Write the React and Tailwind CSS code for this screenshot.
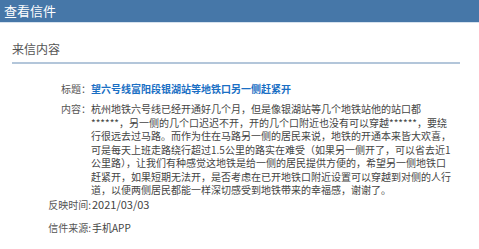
export default function App() {
  const font = { fontFamily: '"Noto Sans CJK SC", "Noto Sans", sans-serif' };
  return (
    <div className="w-[479px] h-[249px] bg-white overflow-hidden" style={font}>
      <div className="h-[22px] bg-[#4677a8] border-b border-[#d6e2ee] box-content flex items-center pl-[4px]">
        <span className="text-[13px] leading-[16px] text-white">查看信件</span>
      </div>
      <div className="px-3">
        <div className="mt-[18px] w-[448px] border-b-2 border-[#b3c6da] pb-[5px] text-[12px] leading-[16px] text-[#555]">
          来信内容
        </div>
        <div className="mt-[18px] flex text-[10px] leading-[14px]">
          <div className="w-[79px] shrink-0 text-right text-[#555]">标题：</div>
          <div className="font-bold text-[#1a6fc4]">望六号线富阳段银湖站等地铁口另一侧赶紧开</div>
        </div>
        <div className="mt-[6px] flex text-[10px] leading-[13.5px]">
          <div className="w-[79px] shrink-0 text-right text-[#555]">内容：</div>
          <div className="w-[363px] text-[#444]">
            杭州地铁六号线已经开通好几个月，但是像银湖站等几个地铁站他的站口都******，另一侧的几个口迟迟不开，开的几个口附近也没有可以穿越******，要绕行很远去过马路。而作为住在马路另一侧的居民来说，地铁的开通本来皆大欢喜，可是每天上班走路绕行超过1.5公里的路实在难受（如果另一侧开了，可以省去近1公里路），让我们有种感觉这地铁是给一侧的居民提供方便的，希望另一侧地铁口赶紧开，如果短期无法开，是否考虑在已开地铁口附近设置可以穿越到对侧的人行道，以便两侧居民都能一样深切感受到地铁带来的幸福感，谢谢了。
          </div>
        </div>
        <div className="mt-0 flex items-baseline text-[10px] leading-[14px]">
          <div className="w-[79px] shrink-0 text-right text-[#555]">反映时间:</div>
          <div className="pl-[1px] text-[11px] text-[#444]">2021/03/03</div>
        </div>
        <div className="mt-[9px] flex text-[10px] leading-[14px]">
          <div className="w-[79px] shrink-0 text-right text-[#555]">信件来源:</div>
          <div className="pl-[1px] text-[#444]">手机APP</div>
        </div>
      </div>
    </div>
  );
}
